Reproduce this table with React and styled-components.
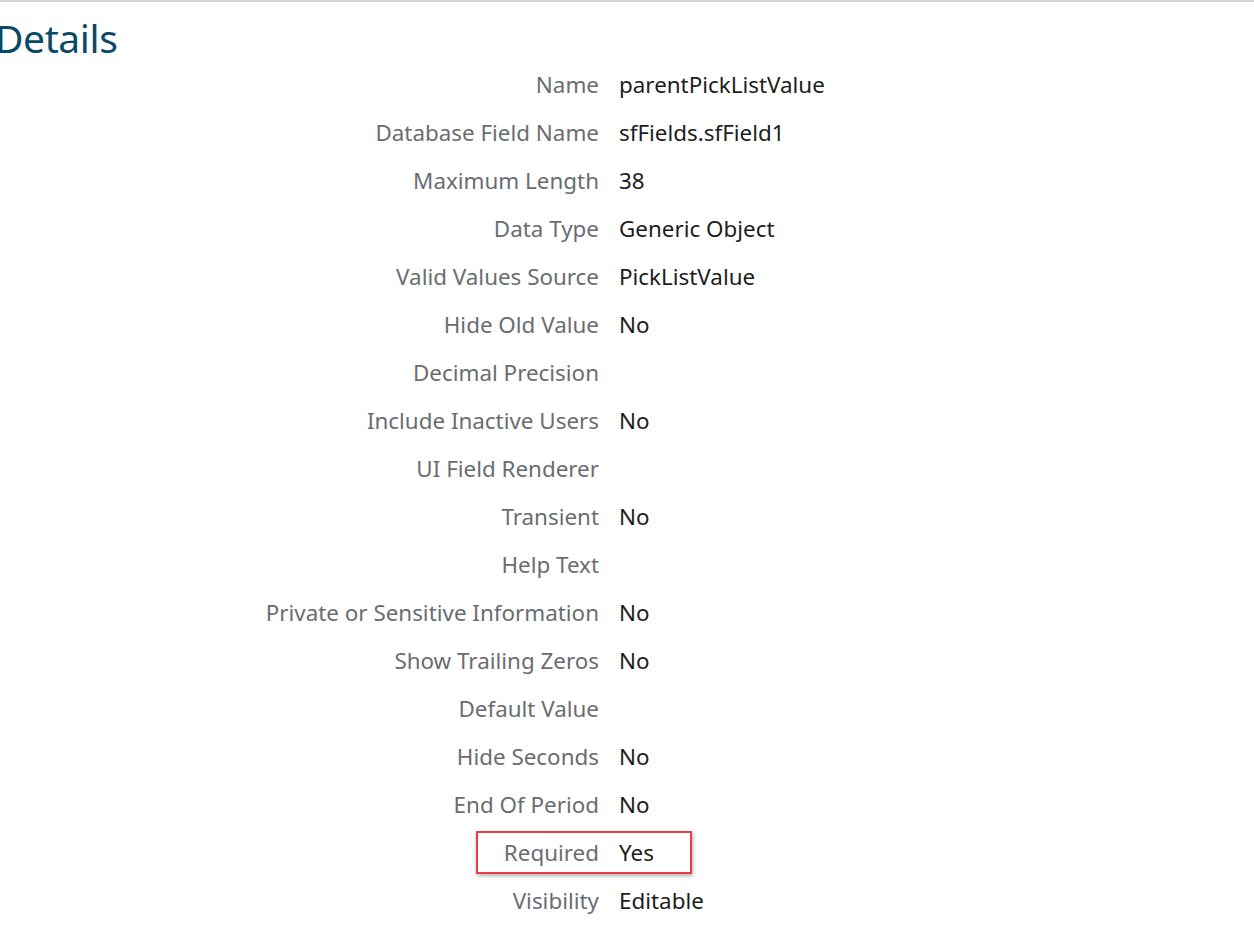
import React from "react"
import styled, { createGlobalStyle } from "styled-components"

const GlobalStyle = createGlobalStyle`
  body {
    margin: 0;
    background: #ffffff;
    font-family: "Noto Sans", "Open Sans", sans-serif;
    overflow: hidden;
  }
`

const Page = styled.div`
  width: 1254px;
  height: 948px;
  border-top: 2px solid #d4d4d4;
  box-sizing: border-box;
  position: relative;
`

const Heading = styled.h2`
  margin: 10px 0 0 -5px;
  font-size: 39px;
  font-weight: 400;
  line-height: 52px;
  color: #0b4a66;
  letter-spacing: -0.4px;
`

const List = styled.div`
  display: flex;
  flex-direction: column;
  margin-top: -4px;
`

const Row = styled.div`
  position: relative;
  display: grid;
  grid-template-columns: 599px auto;
  column-gap: 20px;
  height: 48px;
  align-items: center;
  font-size: 22.4px;
`

const Label = styled.span`
  text-align: right;
  color: #6a6d70;
`

const Value = styled.span`
  color: #1d1d1d;
`

const Highlight = styled.span`
  position: absolute;
  left: 476px;
  top: 3px;
  width: 216px;
  height: 43px;
  box-sizing: border-box;
  border: 2px solid #e63e42;
  box-shadow: 1px 2px 4px rgba(0, 0, 0, 0.3);
  pointer-events: none;
`

const fields = [
  ["Name", "parentPickListValue"],
  ["Database Field Name", "sfFields.sfField1"],
  ["Maximum Length", "38"],
  ["Data Type", "Generic Object"],
  ["Valid Values Source", "PickListValue"],
  ["Hide Old Value", "No"],
  ["Decimal Precision", ""],
  ["Include Inactive Users", "No"],
  ["UI Field Renderer", ""],
  ["Transient", "No"],
  ["Help Text", ""],
  ["Private or Sensitive Information", "No"],
  ["Show Trailing Zeros", "No"],
  ["Default Value", ""],
  ["Hide Seconds", "No"],
  ["End Of Period", "No"],
  ["Required", "Yes", true],
  ["Visibility", "Editable"],
]

const App = () => {
  return (
    <>
      <GlobalStyle />
      <Page>
        <Heading>Details</Heading>
        <List>
          {fields.map(([label, value, marked]) => (
            <Row key={label}>
              <Label>{label}</Label>
              <Value>{value}</Value>
              {marked && <Highlight />}
            </Row>
          ))}
        </List>
      </Page>
    </>
  )
}

export default App
